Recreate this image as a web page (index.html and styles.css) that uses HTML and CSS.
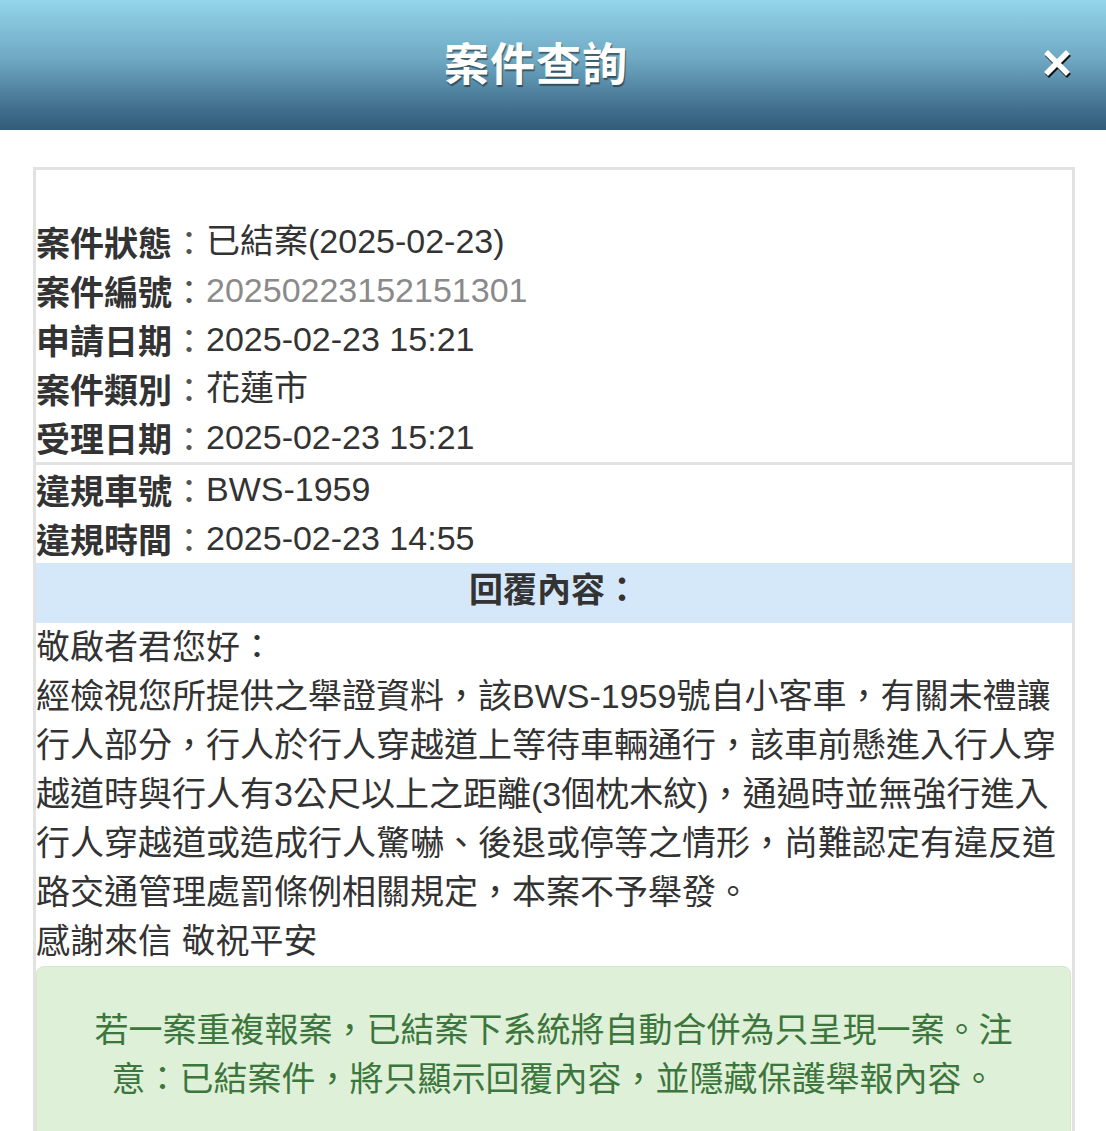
FILE: index.html
```html
<!DOCTYPE html>
<html lang="zh-Hant">
<head>
<meta charset="utf-8">
<title>案件查詢</title>
<link rel="stylesheet" href="styles.css">
</head>
<body>
<header class="topbar">
  <h1 class="title">案件查詢</h1>
  <button class="close" aria-label="關閉">
    <svg viewBox="0 0 32 32" width="32" height="32">
      <g stroke="#111" stroke-width="5.5" stroke-linecap="square">
        <path d="M7 7 L25 25 M25 7 L7 25"/>
      </g>
      <g stroke="#fff" stroke-width="5.5" stroke-linecap="square">
        <path d="M6 5 L24 23 M24 5 L6 23"/>
      </g>
    </svg>
  </button>
</header>
<main class="panel">
  <section class="info">
    <div class="row"><span class="label">案件狀態</span><span class="colon">：</span><span class="value">已結案(2025-02-23)</span></div>
    <div class="row"><span class="label">案件編號</span><span class="colon">：</span><span class="value muted">20250223152151301</span></div>
    <div class="row"><span class="label">申請日期</span><span class="colon">：</span><span class="value">2025-02-23 15:21</span></div>
    <div class="row"><span class="label">案件類別</span><span class="colon">：</span><span class="value">花蓮市</span></div>
    <div class="row"><span class="label">受理日期</span><span class="colon">：</span><span class="value">2025-02-23 15:21</span></div>
  </section>
  <section class="info second">
    <div class="row"><span class="label">違規車號</span><span class="colon">：</span><span class="value">BWS-1959</span></div>
    <div class="row"><span class="label">違規時間</span><span class="colon">：</span><span class="value">2025-02-23 14:55</span></div>
  </section>
  <div class="reply-head">回覆內容：</div>
  <div class="reply-body">
    <p>敬啟者君您好：<br>經檢視您所提供之舉證資料，該BWS-1959號自小客車，有關未禮讓<br>行人部分，行人於行人穿越道上等待車輛通行，該車前懸進入行人穿<br>越道時與行人有3公尺以上之距離(3個枕木紋)，通過時並無強行進入<br>行人穿越道或造成行人驚嚇、後退或停等之情形，尚難認定有違反道<br>路交通管理處罰條例相關規定，本案不予舉發。<br>感謝來信 敬祝平安</p>
  </div>
  <div class="notice">若一案重複報案，已結案下系統將自動合併為只呈現一案。注<br>意：已結案件，將只顯示回覆內容，並隱藏保護舉報內容。</div>
</main>
</body>
</html>
```
FILE: styles.css
```css
html, body {
  margin: 0;
  padding: 0;
  background: #ffffff;
}
body {
  font-family: "Liberation Sans", "Noto Sans CJK TC", sans-serif;
  color: #333333;
  width: 1106px;
  height: 1131px;
  overflow: hidden;
}
.topbar {
  position: relative;
  height: 130px;
  background: linear-gradient(to bottom, #93d5ea 0%, #6fa9c3 45%, #3f6d8b 85%, #325c7a 100%);
  display: flex;
  align-items: center;
  justify-content: center;
  padding-right: 34px;
  box-sizing: border-box;
}
.title {
  margin: 0;
  margin-top: -7px;
  font-family: "Noto Sans CJK TC", sans-serif;
  font-size: 45px;
  font-weight: 700;
  color: #ffffff;
  letter-spacing: 1px;
  text-shadow: 1px 2px 1px rgba(0, 0, 0, 0.45);
  line-height: 1;
}
.close {
  position: absolute;
  right: 30px;
  top: 48px;
  width: 34px;
  height: 34px;
  padding: 0;
  border: 0;
  background: transparent;
}
.close svg {
  display: block;
}
.panel {
  margin: 37px 31px 0 33px;
  border: 3px solid #e2e2e2;
  border-bottom: 0;
  height: 1000px;
}
.info {
  padding-top: 47px;
}
.info.second {
  padding-top: 0;
  border-top: 3px solid #e2e2e2;
}
.row {
  display: flex;
  font-size: 34px;
  line-height: 49px;
  height: 49px;
  white-space: nowrap;
}
.label {
  font-family: "Noto Sans CJK TC", sans-serif;
  font-weight: 700;
  color: #333333;
}
.colon {
  font-family: "Noto Sans CJK TC", sans-serif;
  color: #555555;
}
.value {
  color: #333333;
}
.value.muted {
  color: #8a8a8a;
}
.reply-head {
  background: #d5e8fa;
  height: 60px;
  line-height: 49px;
  text-align: center;
  font-family: "Noto Sans CJK TC", sans-serif;
  font-weight: 700;
  font-size: 34px;
  color: #333333;
}
.reply-body p {
  margin: 0;
  font-size: 34px;
  line-height: 49px;
  white-space: nowrap;
  color: #333333;
}
.notice {
  margin: 0 1px 0 0;
  background: #dff0d8;
  border: 1px solid #d6e9c6;
  border-radius: 8px;
  color: #3c763d;
  font-family: "Noto Sans CJK TC", sans-serif;
  font-size: 34px;
  line-height: 49px;
  text-align: center;
  padding: 36px 20px 60px;
  white-space: nowrap;
}
```
